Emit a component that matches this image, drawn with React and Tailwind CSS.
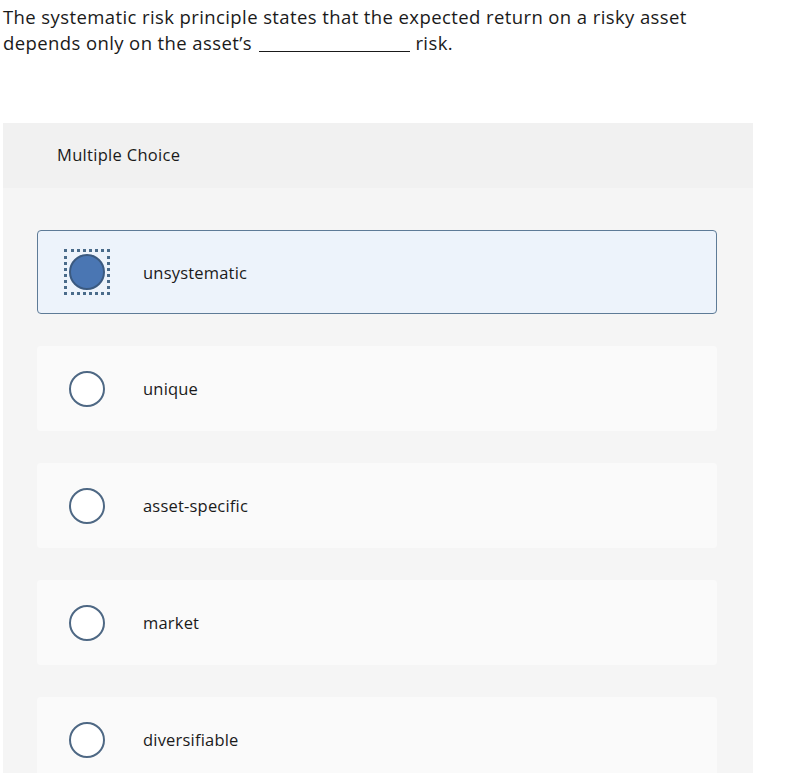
import React, { useState } from "react";

const choices = [
  { id: 1, text: "unsystematic" },
  { id: 2, text: "unique" },
  { id: 3, text: "asset-specific" },
  { id: 4, text: "market" },
  { id: 5, text: "diversifiable" },
];

const Radio = ({ checked }) => (
  <div
    className={
      checked
        ? "flex h-[46px] w-[46px] items-center justify-center border-[3px] border-dotted border-[#4a6b8a]"
        : "flex h-[46px] w-[46px] items-center justify-center"
    }
  >
    <span
      className={
        checked
          ? "block h-[36px] w-[36px] rounded-full border-2 border-[#3b5a80] bg-[#4a76b3]"
          : "block h-[36px] w-[36px] rounded-full border-2 border-[#4e6884] bg-white"
      }
    />
  </div>
);

const App = () => {
  const [selected, setSelected] = useState(1);

  return (
    <div className="min-h-[778px] w-[800px] bg-white font-['Open_Sans','Liberation_Sans',sans-serif] text-[#1a1a1a]">
      <p className="pl-[3px] pt-[4px] text-[18.5px] leading-[26px] tracking-[0.4px] whitespace-nowrap">
        The systematic risk principle states that the expected return on a risky asset
        <br />
        depends only on the asset’s{" "}
        <span className="ml-[2px] inline-block w-[151px] border-b border-[#1a1a1a] align-[-2px]" /> risk.
      </p>

      {/* Question panel */}
      <div className="ml-[3px] mt-[67px] h-[650px] w-[750px] overflow-hidden bg-[#f5f5f5]">
        <div className="flex h-[65px] items-center bg-[#f1f1f1] pl-[54px] text-[16.5px] tracking-[0.3px]">
          Multiple Choice
        </div>
        <ul className="flex flex-col gap-[32px] px-[34px] pt-[42px] pb-[8px]">
          {choices.map((c) => {
            const checked = selected === c.id;
            return (
              <li key={c.id}>
                <button
                  onClick={() => setSelected(c.id)}
                  className={
                    checked
                      ? "flex h-[84px] w-[680px] items-center rounded-[4px] border border-[#5e7b97] bg-[#edf3fb] pl-[26px] text-left"
                      : "flex h-[85px] w-[680px] items-center rounded-[4px] bg-[#fafafa] pl-[27px] text-left"
                  }
                >
                  <Radio checked={checked} />
                  <span className="ml-[33px] mt-[2px] text-[16.5px] tracking-[0.2px]">{c.text}</span>
                </button>
              </li>
            );
          })}
        </ul>
      </div>
    </div>
  );
};

export default App;
